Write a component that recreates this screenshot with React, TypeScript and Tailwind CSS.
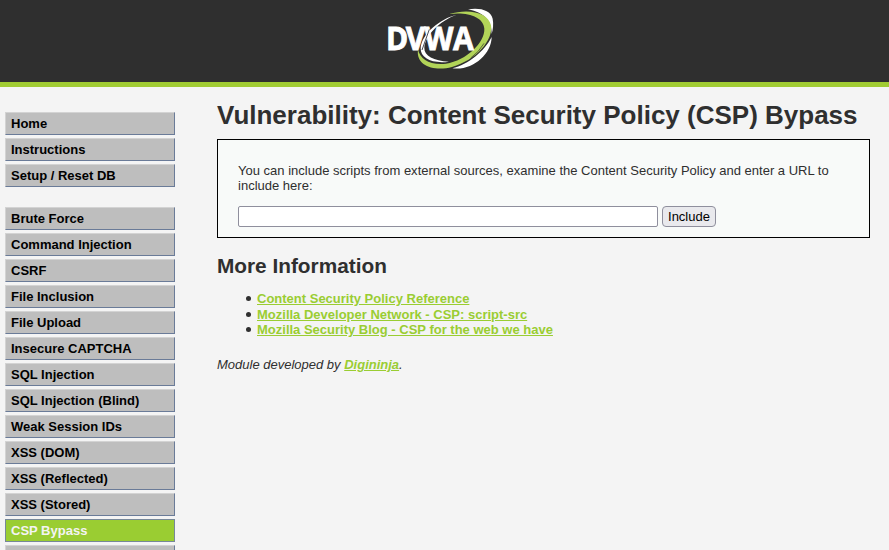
const groups: string[][] = [
  ["Home", "Instructions", "Setup / Reset DB"],
  [
    "Brute Force",
    "Command Injection",
    "CSRF",
    "File Inclusion",
    "File Upload",
    "Insecure CAPTCHA",
    "SQL Injection",
    "SQL Injection (Blind)",
    "Weak Session IDs",
    "XSS (DOM)",
    "XSS (Reflected)",
    "XSS (Stored)",
    "CSP Bypass",
    "",
  ],
];

const links = [
  { label: "Content Security Policy Reference", height: "h-[15px]" },
  { label: "Mozilla Developer Network - CSP: script-src", height: "h-4 pt-px" },
  { label: "Mozilla Security Blog - CSP for the web we have", height: "h-[15px]" },
];

function Logo() {
  return (
    <svg viewBox="0 0 360 246" className="ml-[-9px] block h-[82px] w-[120px]" role="img" aria-label="DVWA">
      <path fill="#fff" d="M230 44 C180 62 136 105 133 143 C132 168 161 182 207 185 C157 192 121 175 122 145 C124 102 180 56 230 44Z" />
      <path fill="#fff" d="M264 28 C301 22 332 31 338 56 C341 72 339 88 335 102 C336 67 315 37 264 28Z" />
      <path fill="#fff" d="M335 111 C334 163 278 213 217 205 C265 194 314 153 335 111Z" />
      <path fill="#b2d458" d="M207 42 C268 24 325 38 333 76 C341 120 288 181 216 201 C164 215 107 198 114 149 C121 178 149 196 198 191 C260 181 315 127 313 86 C311 51 264 35 207 42Z" />
      <path fill="none" stroke="#2f2f2f" strokeWidth="2" d="M272 174 Q298 155 312 130" />
      <text
        x="19.6 84 145 238"
        y="151"
        transform="scale(0.92 1)"
        fill="#fff"
        stroke="#fff"
        strokeWidth="2.5"
        className="font-['Open_Sans',sans-serif] text-[98px] font-bold"
      >
        DVWA
      </text>
      <path fill="none" stroke="#4a4e57" strokeWidth="3" d="M126 150 L148 88" />
    </svg>
  );
}

function MenuItem({ label }: { label: string }) {
  const active = label === "CSP Bypass";
  return (
    <li
      className={
        active
          ? "h-[23px] border border-[#778899] bg-[#9acd32] pl-[5px] leading-[21px] text-[#f4f4f4]"
          : "h-[23px] border border-t-[#d3d3d3] border-l-[#d3d3d3] border-r-[#6a7b98] border-b-[#6a7b98] bg-[#bebebe] pl-[5px] leading-[21px] text-black"
      }
    >
      <a href="#">{label}</a>
    </li>
  );
}

export default function App() {
  return (
    <div className="h-[550px] overflow-hidden bg-[#f4f4f4] font-['Liberation_Sans',Arial,sans-serif] text-[13px] leading-[15px] text-[#2f2f2f]">
      <header className="flex h-[87px] justify-center border-b-[5px] border-[#a1cc33] bg-[#2f2f2f]">
        <Logo />
      </header>
      <div className="flex">
        <nav className="ml-[5px] flex w-[170px] shrink-0 flex-col gap-5 pt-[25px] font-bold">
          {groups.map((items) => (
            <ul key={items[0]} className="flex flex-col gap-[3px]">
              {items.map((label) => (
                <MenuItem key={label} label={label} />
              ))}
            </ul>
          ))}
        </nav>
        <main className="ml-[42px] w-[653px] pt-[13px]">
          <h1 className="text-[26px] leading-[30px] font-bold">Vulnerability: Content Security Policy (CSP) Bypass</h1>
          <section className="mt-[9px] h-[99px] border border-black bg-[#f8faf9] px-5 pt-[23px]">
            <p className="tracking-[0.006px]">You can include scripts from external sources, examine the Content Security Policy and enter a URL to include here:</p>
            <form className="mt-[13px] flex gap-1">
              <input className="h-[21px] w-[420px] rounded-[2px] border border-[#8f8f9d] bg-white px-1" />
              <button type="button" className="h-[21px] w-[54px] rounded-[4px] border border-[#8f8f9d] bg-[#e9e9ed] text-[13px] leading-[19px] text-black">
                Include
              </button>
            </form>
          </section>
          <h2 className="mt-4 text-[20.8px] leading-6 font-bold">More Information</h2>
          <ul className="mt-[13px] pl-10 font-bold text-[#9acd32]">
            {links.map(({ label, height }) => (
              <li key={label} className={`flex items-center ${height}`}>
                <span className="-ml-[11px] mr-[6px] size-[5px] rounded-full bg-[#2f2f2f]" />
                <a href="#" className="underline">{label}</a>
              </li>
            ))}
          </ul>
          <p className="mt-5 italic">
            Module developed by <a href="#" className="font-bold text-[#9acd32] underline">Digininja</a>.
          </p>
        </main>
      </div>
    </div>
  );
}
